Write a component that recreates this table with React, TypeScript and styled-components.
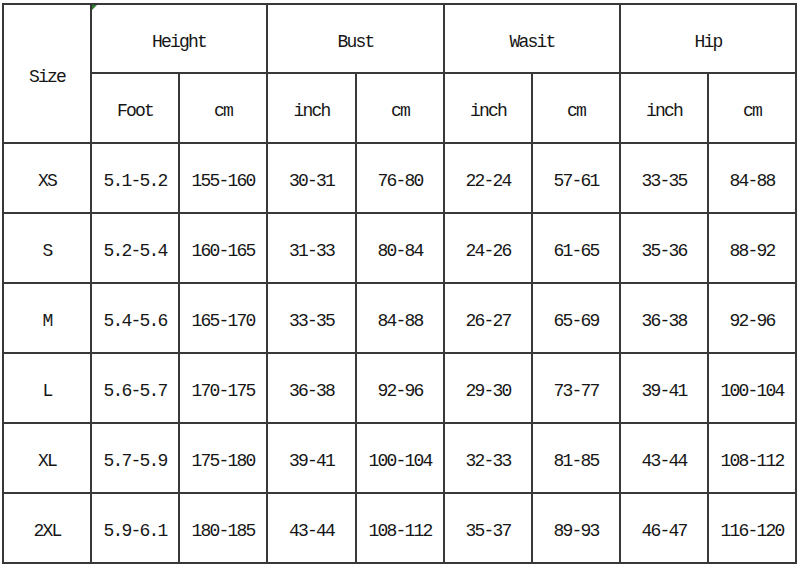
import { type ReactElement } from "react";

import styled, { createGlobalStyle } from "styled-components";

type Row = Readonly<{
	size: string;
	values: readonly string[];
}>;

const GROUPS = ["Height", "Bust", "Wasit", "Hip"] as const;

const UNITS = ["Foot", "cm", "inch", "cm", "inch", "cm", "inch", "cm"] as const;

const ROWS: readonly Row[] = [
	{ size: "XS", values: ["5.1-5.2", "155-160", "30-31", "76-80", "22-24", "57-61", "33-35", "84-88"] },
	{ size: "S", values: ["5.2-5.4", "160-165", "31-33", "80-84", "24-26", "61-65", "35-36", "88-92"] },
	{ size: "M", values: ["5.4-5.6", "165-170", "33-35", "84-88", "26-27", "65-69", "36-38", "92-96"] },
	{ size: "L", values: ["5.6-5.7", "170-175", "36-38", "92-96", "29-30", "73-77", "39-41", "100-104"] },
	{ size: "XL", values: ["5.7-5.9", "175-180", "39-41", "100-104", "32-33", "81-85", "43-44", "108-112"] },
	{ size: "2XL", values: ["5.9-6.1", "180-185", "43-44", "108-112", "35-37", "89-93", "46-47", "116-120"] },
];

const GlobalStyle = createGlobalStyle`
	html, body {
		margin: 0;
		background: #ffffff;
	}

	body {
		padding: 3px 0 0 2px;
		font-family: "Liberation Mono", "Noto Sans CJK SC", monospace;
	}
`;

const StyledSheet = styled.div({
	display: "grid",
	gridTemplateColumns: "86px 86px 86px 87px 86px 86px 86px 86px 86px",
	gridTemplateRows: "67px repeat(7, 68px)",
	gap: 2,
	width: "fit-content",
	border: "2px solid #383838",
	backgroundColor: "#383838",
});

const StyledCell = styled.div<{ $colSpan?: number; $rowSpan?: number }>`
	position: relative;
	display: flex;
	align-items: center;
	justify-content: center;
	padding-top: 6px;
	box-sizing: border-box;
	background: #ffffff;
	color: #161616;
	font-size: 18px;
	letter-spacing: -1.8px;
	white-space: nowrap;
	grid-column: span ${(p) => p.$colSpan ?? 1};
	grid-row: span ${(p) => p.$rowSpan ?? 1};
`;

const StyledMarker = styled.span({
	position: "absolute",
	top: 0,
	left: 0,
	width: 0,
	height: 0,
	borderTop: "5px solid #2f7d32",
	borderRight: "5px solid transparent",
});

export default function App(): ReactElement {
	return (
		<>
			<GlobalStyle />
			<StyledSheet>
				<StyledCell $rowSpan={2}>Size</StyledCell>
				{GROUPS.map((group, index) => (
					<StyledCell key={group} $colSpan={2}>
						{index === 0 && <StyledMarker />}
						{group}
					</StyledCell>
				))}
				{UNITS.map((unit, index) => (
					<StyledCell key={`${unit}-${index}`}>{unit}</StyledCell>
				))}
				{ROWS.map((row) => [
					<StyledCell key={row.size}>{row.size}</StyledCell>,
					...row.values.map((value, index) => (
						<StyledCell key={`${row.size}-${index}`}>{value}</StyledCell>
					)),
				])}
			</StyledSheet>
		</>
	);
}
